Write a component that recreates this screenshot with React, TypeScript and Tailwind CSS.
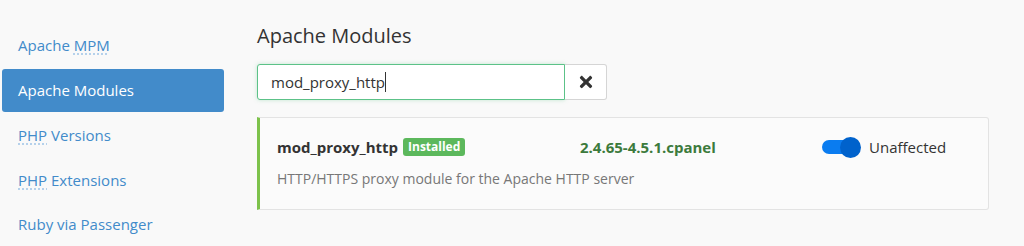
import { FaTimes } from "react-icons/fa";

const navItems = [
  { label: "Apache", abbr: "MPM", abbrFirst: false },
  { label: "Apache Modules", active: true },
  { label: "Versions", abbr: "PHP", abbrFirst: true },
  { label: "Extensions", abbr: "PHP", abbrFirst: true },
  { label: "Ruby via Passenger" },
];

function Sidebar() {
  return (
    <nav className="w-[224px] pl-[2px] pt-[24px] flex flex-col gap-[2px] shrink-0">
      {navItems.map((item, i) => {
        const abbr = item.abbr && (
          <span className="underline decoration-dotted decoration-[#9ec3e6] underline-offset-[3px]">{item.abbr}</span>
        );
        return (
          <div
            key={i}
            className={
              "h-[43px] flex items-center pl-[16px] rounded-[3px] text-[15px] " +
              (item.active ? "bg-[#428bca] text-white" : "text-[#428bca]")
            }
          >
            {item.abbr ? (
              item.abbrFirst ? (
                <>
                  {abbr}&nbsp;{item.label}
                </>
              ) : (
                <>
                  {item.label}&nbsp;{abbr}
                </>
              )
            ) : (
              item.label
            )}
          </div>
        );
      })}
    </nav>
  );
}

function ModuleCard() {
  return (
    <div className="mt-[17px] w-[732px] h-[93px] bg-[#fbfbfb] border border-[#e3e3e3] border-l-[3px] border-l-[#7dc24b] rounded-r-[3px] pl-[17px] pt-[17px]">
      <div className="flex items-center h-[24px]">
        <div className="w-[303px] flex items-center gap-[5px]">
          <span className="font-bold text-[15px] text-[#333]">mod_proxy_http</span>
          <span className="bg-[#5cb85c] text-white text-[12px] font-bold leading-none px-[5px] py-[3px] rounded-[3px]">
            Installed
          </span>
        </div>
        <div className="w-[242px] font-bold text-[15px] text-[#3c7a3c]">2.4.65-4.5.1.cpanel</div>
        <div className="flex items-center gap-[8px]">
          <div className="relative w-[39px] h-[21px] flex items-center">
            <div className="w-[32px] h-[14px] rounded-full bg-[#0a7cf0]"></div>
            <div className="absolute right-0 top-0 w-[21px] h-[21px] rounded-full bg-[#0062cc]"></div>
          </div>
          <span className="text-[15px] text-[#333]">Unaffected</span>
        </div>
      </div>
      <p className="mt-[9px] text-[14px] text-[#777]">HTTP/HTTPS proxy module for the Apache HTTP server</p>
    </div>
  );
}

export default function App() {
  return (
    <div
      className="w-[1024px] h-[246px] bg-[#f9f9f9] flex overflow-hidden"
      style={{ fontFamily: '"Open Sans", sans-serif' }}
    >
      <Sidebar />
      <main className="pl-[33px] pt-[24px]">
        <h1 className="text-[20px] text-[#333] leading-[24px]">Apache Modules</h1>
        <div className="mt-[16px] flex">
          <div className="w-[308px] h-[36px] border border-[#5cc288] rounded-l-[3px] bg-white flex items-center pl-[13px] shadow-[0_0_4px_rgba(92,194,136,0.35)]">
            <span className="text-[15px] text-[#333]">mod_proxy_http</span>
            <span className="w-px h-[20px] bg-[#333]"></span>
          </div>
          <button className="w-[42px] h-[36px] border border-l-0 border-[#d5d5d5] rounded-r-[3px] bg-white flex items-center justify-center text-[#333]">
            <FaTimes size={18} />
          </button>
        </div>
        <ModuleCard />
      </main>
    </div>
  );
}
